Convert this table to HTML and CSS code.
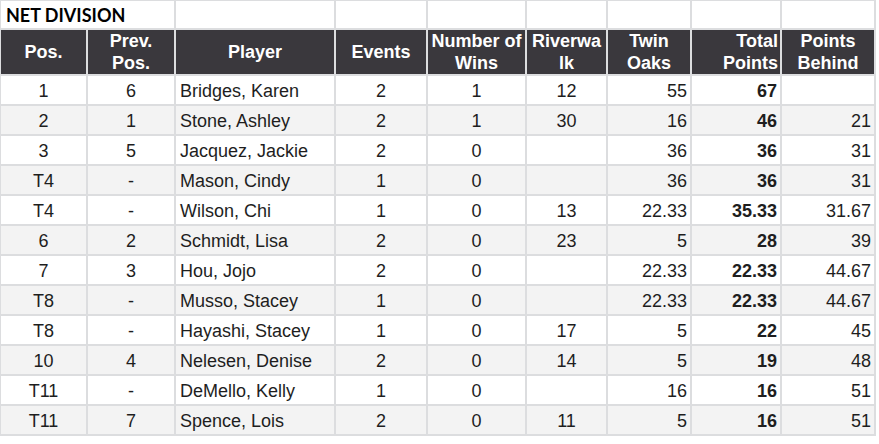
FILE: index.html
```html
<!DOCTYPE html>
<html>
<head>
<meta charset="utf-8">
<link rel="stylesheet" href="styles.css">
</head>
<body>
<table class="standings">
  <colgroup>
    <col class="c-pos"><col class="c-prev"><col class="c-player"><col class="c-events"><col class="c-wins"><col class="c-river"><col class="c-twin"><col class="c-total"><col class="c-behind">
  </colgroup>
  <tr class="title-row">
    <td colspan="2" class="title">NET DIVISION</td>
    <td></td><td></td><td></td><td></td><td></td><td></td><td></td>
  </tr>
  <tr class="head">
    <th>Pos.</th>
    <th>Prev.<br>Pos.</th>
    <th>Player</th>
    <th>Events</th>
    <th>Number of Wins</th>
    <th class="brk">Riverwalk</th>
    <th>Twin Oaks</th>
    <th class="r">Total Points</th>
    <th>Points Behind</th>
  </tr>
  <tr><td>1</td><td>6</td><td class="l">Bridges, Karen</td><td>2</td><td>1</td><td>12</td><td class="r">55</td><td class="r b">67</td><td class="r"></td></tr>
  <tr class="alt"><td>2</td><td>1</td><td class="l">Stone, Ashley</td><td>2</td><td>1</td><td>30</td><td class="r">16</td><td class="r b">46</td><td class="r">21</td></tr>
  <tr><td>3</td><td>5</td><td class="l">Jacquez, Jackie</td><td>2</td><td>0</td><td></td><td class="r">36</td><td class="r b">36</td><td class="r">31</td></tr>
  <tr class="alt"><td>T4</td><td>-</td><td class="l">Mason, Cindy</td><td>1</td><td>0</td><td></td><td class="r">36</td><td class="r b">36</td><td class="r">31</td></tr>
  <tr><td>T4</td><td>-</td><td class="l">Wilson, Chi</td><td>1</td><td>0</td><td>13</td><td class="r">22.33</td><td class="r b">35.33</td><td class="r">31.67</td></tr>
  <tr class="alt"><td>6</td><td>2</td><td class="l">Schmidt, Lisa</td><td>2</td><td>0</td><td>23</td><td class="r">5</td><td class="r b">28</td><td class="r">39</td></tr>
  <tr><td>7</td><td>3</td><td class="l">Hou, Jojo</td><td>2</td><td>0</td><td></td><td class="r">22.33</td><td class="r b">22.33</td><td class="r">44.67</td></tr>
  <tr class="alt"><td>T8</td><td>-</td><td class="l">Musso, Stacey</td><td>1</td><td>0</td><td></td><td class="r">22.33</td><td class="r b">22.33</td><td class="r">44.67</td></tr>
  <tr><td>T8</td><td>-</td><td class="l">Hayashi, Stacey</td><td>1</td><td>0</td><td>17</td><td class="r">5</td><td class="r b">22</td><td class="r">45</td></tr>
  <tr class="alt"><td>10</td><td>4</td><td class="l">Nelesen, Denise</td><td>2</td><td>0</td><td>14</td><td class="r">5</td><td class="r b">19</td><td class="r">48</td></tr>
  <tr><td>T11</td><td>-</td><td class="l">DeMello, Kelly</td><td>1</td><td>0</td><td></td><td class="r">16</td><td class="r b">16</td><td class="r">51</td></tr>
  <tr class="alt"><td>T11</td><td>7</td><td class="l">Spence, Lois</td><td>2</td><td>0</td><td>11</td><td class="r">5</td><td class="r b">16</td><td class="r">51</td></tr>
</table>
</body>
</html>
```
FILE: styles.css
```css
html, body {
  margin: 0;
  padding: 0;
  background: #ffffff;
}

.standings {
  border-collapse: collapse;
  table-layout: fixed;
  width: 875px;
  margin-left: -1px;
  margin-top: -1px;
  font-family: "Liberation Sans", Arial, sans-serif;
  font-size: 18px;
  color: #1e1e1e;
}

.c-pos { width: 87px; }
.c-prev { width: 88px; }
.c-player { width: 160px; }
.c-events { width: 92px; }
.c-wins { width: 99px; }
.c-river { width: 81px; }
.c-twin { width: 84px; }
.c-total { width: 90px; }
.c-behind { width: 94px; }

.standings td,
.standings th {
  border: 2px solid #dcdddf;
  padding: 2px 3px 0;
  text-align: center;
  white-space: nowrap;
  overflow: hidden;
}

.standings tr {
  height: 30px;
}

.standings tr.title-row {
  height: 29px;
}

.standings .title-row td {
  padding-top: 0;
}

.title {
  text-align: left !important;
  font-family: Lato, "Liberation Sans", sans-serif;
  font-weight: 700;
  font-size: 18px;
  color: #000;
  padding-left: 5px !important;
}

.standings .head th {
  background: #3a383d;
  color: #ffffff;
  font-weight: 700;
  line-height: 22px;
  white-space: normal;
  padding: 0 2px;
}

.standings .head th.brk {
  word-break: break-all;
  padding: 0 4px;
}

.standings td.l { text-align: left; padding-left: 4px; }
.standings .r { text-align: right; }
.standings td.b { font-weight: 700; }

.alt td {
  background: #f3f3f3;
}
```
